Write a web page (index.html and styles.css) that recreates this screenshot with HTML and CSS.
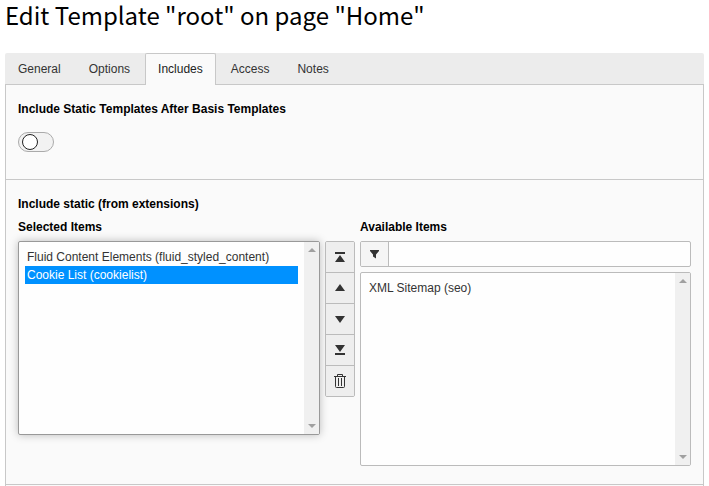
FILE: index.html
```html
<!DOCTYPE html>
<html lang="en">
<head>
<meta charset="utf-8">
<title>Edit Template</title>
<link rel="stylesheet" href="styles.css">
</head>
<body>
<h1>Edit Template "root" on page "Home"</h1>
<nav class="tabs">
  <a class="tab" href="#general">General</a>
  <a class="tab" href="#options">Options</a>
  <a class="tab active" href="#includes" aria-current="page">Includes</a>
  <a class="tab" href="#access">Access</a>
  <a class="tab" href="#notes">Notes</a>
</nav>
<main class="panel" id="includes">
  <section class="section">
    <label class="label" for="after-basis">Include Static Templates After Basis Templates</label>
    <input class="toggle" type="checkbox" id="after-basis">
  </section>
  <section class="section">
    <h2 class="label">Include static (from extensions)</h2>
    <div class="picker">
      <div class="column">
        <label class="label" for="selected">Selected Items</label>
        <div class="list focused">
          <select id="selected" multiple>
            <option>Fluid Content Elements (fluid_styled_content)</option>
            <option selected>Cookie List (cookielist)</option>
          </select>
          <span class="scrollbar" aria-hidden="true">
            <svg width="8" height="4" viewBox="0 0 8 4"><path d="M0 4h8L4 0z"/></svg>
            <svg width="8" height="4" viewBox="0 0 8 4"><path d="M0 0h8L4 4z"/></svg>
          </span>
        </div>
      </div>
      <div class="actions">
        <button type="button" aria-label="Move to top"><svg width="16" height="16" viewBox="0 0 16 16"><path d="M3 3h10v2H3zM3 13h10L8 6z"/></svg></button>
        <button type="button" aria-label="Move up"><svg width="16" height="16" viewBox="0 0 16 16"><path d="M3 11h10L8 4z"/></svg></button>
        <button type="button" aria-label="Move down"><svg width="16" height="16" viewBox="0 0 16 16"><path d="M3 5h10l-5 7z"/></svg></button>
        <button type="button" aria-label="Move to bottom"><svg width="16" height="16" viewBox="0 0 16 16"><path d="M3 3h10l-5 7zM3 11h10v2H3z"/></svg></button>
        <button type="button" aria-label="Remove"><svg width="16" height="16" viewBox="0 0 16 16"><path class="line" d="M2 3.500h12M5.500 3V1.500h5V3M3.500 4v9.500q0 1 1 1h7q1 0 1-1V4M6.500 5v8M9.500 5v8"/></svg></button>
      </div>
      <div class="column">
        <label class="label" for="available">Available Items</label>
        <div class="filter">
          <span class="addon" aria-hidden="true"><svg width="16" height="16" viewBox="0 0 16 16"><path d="M3 4h9v1L9 8.500v4l-3-2v-2L3 5z"/></svg></span>
          <input type="text" aria-label="Filter available items">
        </div>
        <div class="list">
          <select id="available" multiple>
            <option>XML Sitemap (seo)</option>
          </select>
          <span class="scrollbar" aria-hidden="true">
            <svg width="8" height="4" viewBox="0 0 8 4"><path d="M0 4h8L4 0z"/></svg>
            <svg width="8" height="4" viewBox="0 0 8 4"><path d="M0 0h8L4 4z"/></svg>
          </span>
        </div>
      </div>
    </div>
  </section>
</main>
</body>
</html>
```

FILE: styles.css
```css
* { box-sizing: border-box; }

body {
  display: flex;
  flex-direction: column;
  min-height: 100vh;
  margin: 0;
  padding: 0 5px;
  background: #fff;
  color: #000;
  font: 12px/18px "Liberation Sans", Arial, sans-serif;
}

h1 {
  margin: 0 0 23px;
  font: 400 24px/30px "Noto Sans CJK JP", sans-serif;
}

.tabs {
  display: flex;
  gap: 2px;
  height: 32px;
  background: #ececec;
  border-bottom: 1px solid #c8c8c8;
  border-radius: 2px 2px 0 0;
}

.tab {
  height: 32px;
  padding: 6px 12px;
  border: 1px solid transparent;
  border-bottom: 0;
  color: #333;
  text-decoration: none;
}

.tab.active {
  background: #fafafa;
  border-color: #c8c8c8;
  border-radius: 2px 2px 0 0;
  color: #222;
}

.panel {
  flex: 1;
  background: #fafafa;
  border: solid #c8c8c8;
  border-width: 0 1px;
}

.section {
  padding: 15px 12px 18px;
  border-bottom: 1px solid #c8c8c8;
}

.section:first-child { padding-bottom: 27px; }

.label {
  display: block;
  margin: 0 0 5px;
  font-size: 12px;
  font-weight: 700;
  line-height: 18px;
}

.toggle {
  display: flex;
  align-items: center;
  appearance: none;
  width: 36px;
  height: 20px;
  margin: 14px 0 0;
  padding: 0 3px;
  background: #f2f2f2;
  border: 1px solid #aaa;
  border-radius: 10px;
}

.toggle::before {
  content: "";
  width: 14px;
  height: 14px;
  background: #fff;
  border: 1px solid #222;
  border-radius: 50%;
}

.toggle:checked { justify-content: flex-end; }

.picker {
  display: grid;
  grid-template-columns: minmax(0, 302fr) 30px minmax(0, 331fr);
  gap: 5px;
}

.list {
  display: flex;
  height: 194px;
  overflow: hidden;
  background: #fefefe;
  border: 1px solid #bbb;
  border-radius: 2px;
}

.list.focused {
  border-color: #999;
  box-shadow: 0 0 8px rgba(0, 0, 0, 0.25);
}

select {
  flex: 1;
  min-width: 0;
  padding: 6px;
  overflow: hidden;
  background: transparent;
  border: 0;
  outline: 0;
  font: inherit;
}

option {
  height: 18px;
  min-height: 18px;
  padding: 2px;
  color: #333;
}

option:checked {
  background: linear-gradient(#0091ff, #0091ff);
  -webkit-text-fill-color: #fff;
}

.scrollbar {
  display: flex;
  flex-direction: column;
  justify-content: space-between;
  align-items: center;
  width: 15px;
  padding: 6px 0;
  background: #f0f0f0;
}

.scrollbar svg { fill: #a0a0a0; }

.actions {
  display: flex;
  flex-direction: column;
  align-self: start;
  margin-top: 23px;
  overflow: hidden;
  border: 1px solid #bbb;
  border-radius: 2px;
}

button {
  display: flex;
  align-items: center;
  justify-content: center;
  height: 31px;
  padding: 0;
  background: #eee;
  border: 0;
  border-bottom: 1px solid #bbb;
}

button:last-child {
  height: 30px;
  border-bottom: 0;
}

svg {
  display: block;
  fill: #333;
}

.line {
  fill: none;
  stroke: #333;
}

.filter {
  display: flex;
  height: 26px;
  margin-bottom: 5px;
  overflow: hidden;
  background: #fefefe;
  border: 1px solid #bbb;
  border-radius: 2px;
}

.addon {
  display: flex;
  align-items: center;
  justify-content: center;
  width: 28px;
  background: #f5f5f5;
  border-right: 1px solid #bbb;
}

.filter input {
  flex: 1;
  min-width: 0;
  padding: 0 8px;
  background: transparent;
  border: 0;
  outline: 0;
  font: inherit;
}
```
